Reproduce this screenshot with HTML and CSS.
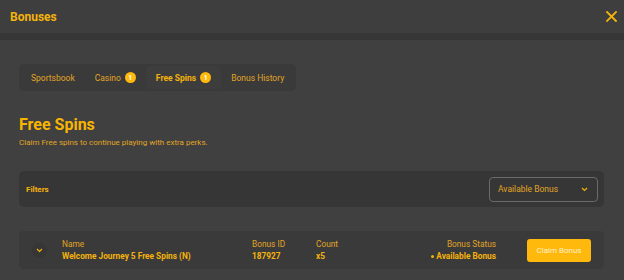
FILE: index.html
```html
<!DOCTYPE html>
<html lang="en">
<head>
    <meta charset="UTF-8">
    <meta name="viewport" content="width=device-width, initial-scale=1.0">
    <title>Bonuses</title>
    <link rel="stylesheet" href="styles.css">
</head>
<body>
    <header class="modal-header">
        <h1 class="modal-title">Bonuses</h1>
        <button class="close-button" aria-label="Close">
            <svg width="11" height="11" viewBox="0 0 11 11">
                <path d="M1 1 L10 10 M10 1 L1 10" stroke="#f5b30b" stroke-width="1.8" stroke-linecap="square"/>
            </svg>
        </button>
    </header>

    <main class="content">
        <nav class="tabs">
            <button class="tab">Sportsbook</button>
            <button class="tab">Casino <span class="badge">1</span></button>
            <button class="tab active">Free Spins <span class="badge">1</span></button>
            <button class="tab">Bonus History</button>
        </nav>

        <h2 class="section-title">Free Spins</h2>
        <p class="section-text">Claim Free spins to continue playing with extra perks.</p>

        <div class="filters">
            <span class="filters-label">Filters</span>
            <div class="select">
                <span>Available Bonus</span>
                <svg width="7" height="5" viewBox="0 0 7 5">
                    <path d="M1 1 L3.5 3.5 L6 1" fill="none" stroke="#f5b30b" stroke-width="1.2"/>
                </svg>
            </div>
        </div>

        <div class="bonus-row">
            <button class="expand-button">
                <svg width="7" height="5" viewBox="0 0 7 5">
                    <path d="M1 1 L3.5 3.5 L6 1" fill="none" stroke="#f5b30b" stroke-width="1.2"/>
                </svg>
            </button>
            <div class="cell cell-name">
                <span class="cell-label">Name</span>
                <span class="cell-value">Welcome Journey 5 Free Spins (N)</span>
            </div>
            <div class="cell cell-id">
                <span class="cell-label">Bonus ID</span>
                <span class="cell-value">187927</span>
            </div>
            <div class="cell cell-count">
                <span class="cell-label">Count</span>
                <span class="cell-value">x5</span>
            </div>
            <div class="cell cell-status">
                <span class="cell-label">Bonus Status</span>
                <span class="cell-value"><span class="dot"></span>Available Bonus</span>
            </div>
            <button class="claim-button">Claim Bonus</button>
        </div>
    </main>
</body>
</html>
```

FILE: styles.css
```css
body {
    font-family: Roboto, "Liberation Sans", sans-serif;
    margin: 0;
    padding: 0;
    background-color: #404040;
    color: #f5b30b;
}
.modal-header {
    display: flex;
    justify-content: space-between;
    align-items: center;
    height: 33px;
    padding: 0 7px 0 10px;
    background-color: #3e3e3e;
    border-bottom: 7px solid #363636;
}
.modal-title {
    margin: 0;
    font-size: 12px;
    font-weight: 700;
    color: #f5b30b;
}
.close-button {
    background: none;
    border: none;
    padding: 0;
    display: flex;
    cursor: pointer;
}
.content {
    padding: 24px 20px 0 19px;
}
.tabs {
    display: inline-flex;
    align-items: center;
    padding: 2px;
    background-color: #3a3a3a;
    border-radius: 5px;
}
.tab {
    display: flex;
    align-items: center;
    gap: 4px;
    height: 23px;
    padding: 0 10px;
    background: none;
    border: none;
    border-radius: 4px;
    font-family: inherit;
    font-size: 8.5px;
    color: #e0a525;
    cursor: pointer;
}
.tab.active {
    background-color: #3d3d3d;
    font-weight: 700;
    color: #f5b30b;
}
.badge {
    display: inline-flex;
    justify-content: center;
    align-items: center;
    width: 11px;
    height: 11px;
    border-radius: 50%;
    background-color: #ffb80c;
    color: #fff;
    font-size: 7px;
    font-weight: 700;
}
.section-title {
    margin: 24px 0 0;
    font-size: 16px;
    font-weight: 700;
    color: #f7b500;
}
.section-text {
    margin: 4px 0 0;
    font-size: 8px;
    color: #e0a525;
}
.filters {
    display: flex;
    justify-content: space-between;
    align-items: center;
    height: 36px;
    margin-top: 24px;
    padding: 0 6px 0 7px;
    background-color: #363636;
    border-radius: 5px;
}
.filters-label {
    font-size: 8px;
    font-weight: 700;
}
.select {
    display: flex;
    justify-content: space-between;
    align-items: center;
    width: 90px;
    height: 23px;
    padding: 0 9px 0 8px;
    border: 1px solid #6a6a6a;
    border-radius: 4px;
    font-size: 8.5px;
    color: #e0a525;
}
.bonus-row {
    display: flex;
    align-items: center;
    height: 38px;
    margin-top: 24px;
    padding: 0 13px 0 13px;
    background-color: #3a3a3a;
    border-radius: 5px;
}
.expand-button {
    display: flex;
    justify-content: center;
    align-items: center;
    width: 15px;
    height: 15px;
    padding: 0;
    border: none;
    border-radius: 50%;
    background-color: #363636;
    cursor: pointer;
}
.cell {
    display: flex;
    flex-direction: column;
    gap: 2px;
    font-size: 8.3px;
}
.cell-label {
    color: #e0a525;
}
.cell-value {
    font-weight: 700;
    color: #f5b30b;
}
.cell-name {
    margin-left: 15px;
    width: 190px;
}
.cell-id {
    width: 64px;
}
.cell-count {
    width: 60px;
}
.cell-status {
    flex: 1;
    align-items: flex-end;
}
.dot {
    display: inline-block;
    width: 3px;
    height: 3px;
    margin: 0 2px 1px 0;
    border-radius: 50%;
    background-color: #f5b30b;
}
.claim-button {
    margin-left: 31px;
    width: 64px;
    height: 23px;
    border: none;
    border-radius: 3px;
    background-color: #ffb80c;
    color: #fff2cc;
    font-family: inherit;
    font-size: 8px;
    cursor: pointer;
}
```
